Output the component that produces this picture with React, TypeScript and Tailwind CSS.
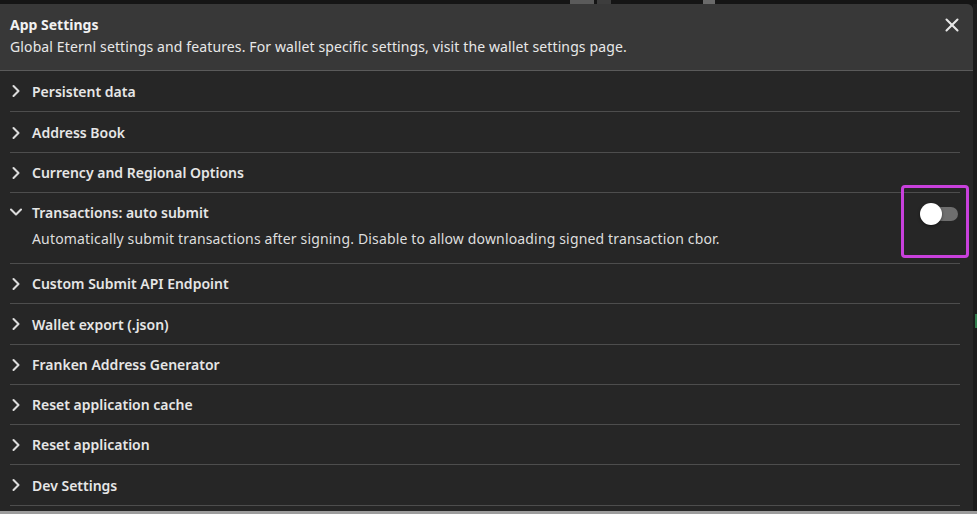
import { ChevronRight, ChevronDown, X } from 'lucide-react';

const rowsBefore = ['Persistent data', 'Address Book', 'Currency and Regional Options'];
const rowsAfter = [
  'Custom Submit API Endpoint',
  'Wallet export (.json)',
  'Franken Address Generator',
  'Reset application cache',
  'Reset application',
  'Dev Settings',
];

const Row = ({ title, tall }: { title: string; tall?: boolean }) => (
  <div className={`${tall ? 'h-[41px]' : 'h-[40px]'} flex items-center border-b border-[#4d4d4d]`}>
    <ChevronRight size={20} strokeWidth={2.5} className="ml-[-4px] text-[#dcdcdc]" />
    <span className="ml-[6px] text-[14px] font-semibold text-[#e6e6e6]">{title}</span>
  </div>
);

const App = () => {
  return (
    <div
      className="w-[977px] h-[514px] bg-[#151515] flex flex-col overflow-hidden"
      style={{ fontFamily: '"Noto Sans", "Open Sans", sans-serif' }}
    >
      <div className="h-[4px] flex shrink-0">
        <div className="ml-[570px] w-[24px] bg-[#5a5a5a]" />
        <div className="ml-[3px] w-[14px] bg-[#3d3d3d]" />
        <div className="ml-[92px] w-[12px] bg-[#6a6a6a]" />
      </div>
      <div className="flex flex-1 min-h-0">
        <div className="w-[973px] flex flex-col bg-[#262626] rounded-tr-[6px] overflow-hidden">
          <div className="bg-[#383838] border-b border-[#5a5a5a] px-[10px] pt-[10px] pb-[12px] flex items-start">
            <div className="flex-1">
              <div className="text-[14px] leading-[22px] font-bold text-[#f2f2f2]">App Settings</div>
              <div className="text-[14px] leading-[22px] tracking-[0.12px] text-[#e8e8e8]">
                Global Eternl settings and features. For wallet specific settings, visit the wallet settings page.
              </div>
            </div>
            <button className="mt-[0px] mr-[0px] text-[#e6e6e6]">
              <X size={22} strokeWidth={2.25} />
            </button>
          </div>
          <div className="flex-1 pl-[10px] pr-[13px]">
            <Row title={rowsBefore[0]} tall />
            <div className="h-[1px]" />
            <Row title={rowsBefore[1]} />
            <Row title={rowsBefore[2]} />
            <div className="relative h-[71px] border-b border-[#4d4d4d] pt-[9px]">
              <div className="flex items-center h-[20px]">
                <ChevronDown size={20} strokeWidth={2.5} className="ml-[-4px] text-[#dcdcdc]" />
                <span className="ml-[6px] text-[14px] font-semibold text-[#e6e6e6]">Transactions: auto submit</span>
              </div>
              <div className="ml-[22px] mt-[7px] text-[14px] leading-[20px] tracking-[0.16px] text-[#dedede]">
                Automatically submit transactions after signing. Disable to allow downloading signed transaction cbor.
              </div>
              <div className="absolute right-[2px] top-[10px] flex items-center">
                <div className="relative w-[38px] h-[22px] flex items-center">
                  <div className="ml-[7px] w-[31px] h-[14px] rounded-full bg-[#6e6e6e]" />
                  <div className="absolute left-0 top-0 w-[22px] h-[22px] rounded-full bg-white shadow-[0_1px_3px_rgba(0,0,0,0.5)]" />
                </div>
              </div>
              <div className="absolute left-[891px] top-[-8px] w-[68px] h-[73px] border-[3px] border-[#c840dc] rounded-[4px]" />
            </div>
            <Row title={rowsAfter[0]} />
            <Row title={rowsAfter[1]} tall />
            <Row title={rowsAfter[2]} />
            <Row title={rowsAfter[3]} />
            <Row title={rowsAfter[4]} />
            <Row title={rowsAfter[5]} tall />
          </div>
        </div>
        <div className="w-[4px] bg-[#1b1b1b] flex flex-col">
          <div className="mt-[310px] h-[14px] w-[2px] ml-[2px] bg-[#2f7a4a]" />
        </div>
      </div>
      <div className="h-[3px] shrink-0 bg-[#9c9c9c]" />
    </div>
  );
};

export default App;
